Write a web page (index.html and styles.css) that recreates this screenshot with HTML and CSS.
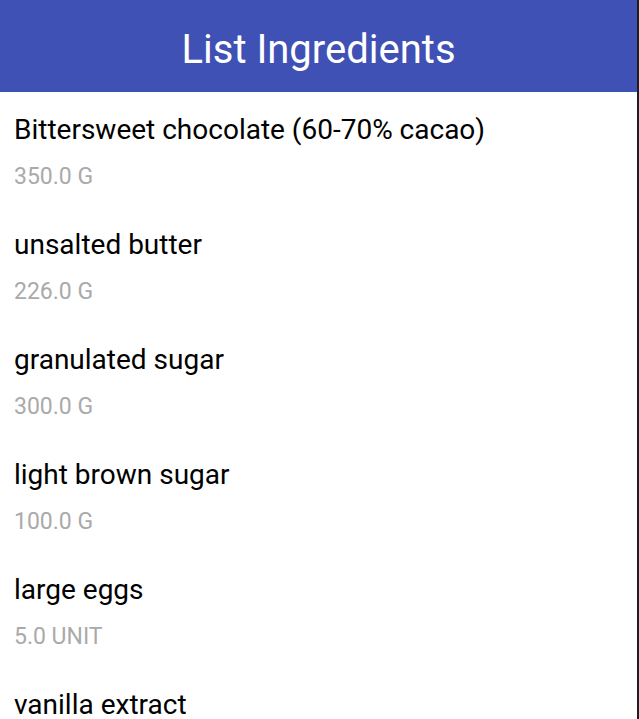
FILE: index.html
```html
<!DOCTYPE html>
<html>
<head>
<meta charset="utf-8">
<link rel="stylesheet" href="styles.css">
</head>
<body>
<div class="app">
  <header class="bar"><h1 class="title">List Ingredients</h1></header>
  <ul class="list">
    <li class="item"><div class="name">Bittersweet chocolate (60-70% cacao)</div><div class="qty">350.0 G</div></li>
    <li class="item"><div class="name">unsalted butter</div><div class="qty">226.0 G</div></li>
    <li class="item"><div class="name">granulated sugar</div><div class="qty">300.0 G</div></li>
    <li class="item"><div class="name">light brown sugar</div><div class="qty">100.0 G</div></li>
    <li class="item"><div class="name">large eggs</div><div class="qty">5.0 UNIT</div></li>
    <li class="item"><div class="name">vanilla extract</div><div class="qty">2.0 TSP</div></li>
  </ul>
</div>
</body>
</html>
```
FILE: styles.css
```css
html, body {
  margin: 0;
  padding: 0;
  height: 100%;
  overflow: hidden;
  background: #1e1e1e;
}
.app {
  width: 637px;
  height: 100%;
  overflow: hidden;
  background: #ffffff;
  font-family: Roboto, "Noto Sans", sans-serif;
}
.bar {
  height: 92px;
  box-sizing: border-box;
  padding-top: 7px;
  background: #3f51b5;
  display: flex;
  align-items: center;
  justify-content: center;
}
.title {
  margin: 0;
  color: #ffffff;
  font-size: 40px;
  font-weight: 400;
  line-height: 1;
}
.list {
  list-style: none;
  margin: 0;
  padding: 0;
}
.item {
  padding: 22px 14px 17px;
}
.name {
  font-size: 28px;
  line-height: 32px;
  color: #000000;
}
.qty {
  margin-top: 17px;
  font-size: 23px;
  line-height: 27px;
  color: #aaaaaa;
}
```
